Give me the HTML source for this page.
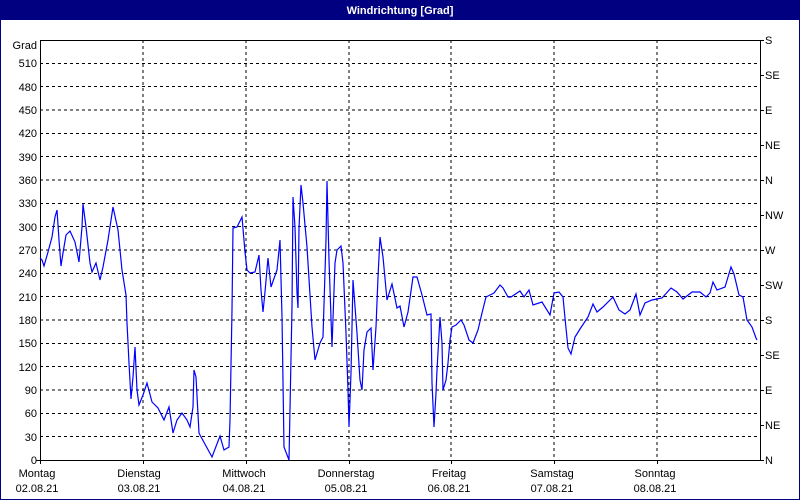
<!DOCTYPE html>
<html><head><meta charset="utf-8"><style>
html,body{margin:0;padding:0;background:#fff;}
body{width:800px;height:500px;overflow:hidden;}
svg{display:block;}
text{font-family:"Liberation Sans",sans-serif;font-size:11px;fill:#000;}
</style></head><body>
<svg width="800" height="500" viewBox="0 0 800 500" xmlns="http://www.w3.org/2000/svg">
<rect x="0" y="0" width="800" height="500" fill="#fff"/>
<rect x="0.5" y="0.5" width="799" height="499" fill="none" stroke="#000080" stroke-width="1"/>
<rect x="0" y="0" width="800" height="20" fill="#000080"/>
<text x="400" y="14" text-anchor="middle" style="fill:#fff;font-weight:bold;font-size:11px">Windrichtung [Grad]</text>
<g stroke="#000" stroke-width="1" stroke-dasharray="3,3" shape-rendering="crispEdges">
<line x1="40" y1="436.7" x2="760" y2="436.7"/>
<line x1="40" y1="413.3" x2="760" y2="413.3"/>
<line x1="40" y1="390" x2="760" y2="390"/>
<line x1="40" y1="366.7" x2="760" y2="366.7"/>
<line x1="40" y1="343.3" x2="760" y2="343.3"/>
<line x1="40" y1="320" x2="760" y2="320"/>
<line x1="40" y1="296.7" x2="760" y2="296.7"/>
<line x1="40" y1="273.3" x2="760" y2="273.3"/>
<line x1="40" y1="250" x2="760" y2="250"/>
<line x1="40" y1="226.7" x2="760" y2="226.7"/>
<line x1="40" y1="203.3" x2="760" y2="203.3"/>
<line x1="40" y1="180" x2="760" y2="180"/>
<line x1="40" y1="156.7" x2="760" y2="156.7"/>
<line x1="40" y1="133.3" x2="760" y2="133.3"/>
<line x1="40" y1="110" x2="760" y2="110"/>
<line x1="40" y1="86.7" x2="760" y2="86.7"/>
<line x1="40" y1="63.3" x2="760" y2="63.3"/>
<line x1="143" y1="40" x2="143" y2="460"/>
<line x1="246" y1="40" x2="246" y2="460"/>
<line x1="349" y1="40" x2="349" y2="460"/>
<line x1="451" y1="40" x2="451" y2="460"/>
<line x1="554" y1="40" x2="554" y2="460"/>
<line x1="657" y1="40" x2="657" y2="460"/>
</g>
<g stroke="#000" stroke-width="1" shape-rendering="crispEdges" fill="none">
<path d="M40.5 40.5H760.5V460.5H40.5Z"/>
<path d="M36 460.5H40 M40.5 460V464 M143.5 460V464 M246.5 460V464 M349.5 460V464 M451.5 460V464 M554.5 460V464 M657.5 460V464"/>
<path d="M760 40.5H764 M760 75.5H764 M760 110.5H764 M760 145.5H764 M760 180.5H764 M760 215.5H764 M760 250.5H764 M760 285.5H764 M760 320.5H764 M760 355.5H764 M760 390.5H764 M760 425.5H764 M760 460.5H764"/>
</g>
<g text-anchor="end">
<text x="37" y="49">Grad</text>
<text x="37" y="67">510</text><text x="37" y="91">480</text><text x="37" y="114">450</text><text x="37" y="137">420</text>
<text x="37" y="161">390</text><text x="37" y="184">360</text><text x="37" y="207">330</text><text x="37" y="231">300</text>
<text x="37" y="254">270</text><text x="37" y="277">240</text><text x="37" y="301">210</text><text x="37" y="324">180</text>
<text x="37" y="347">150</text><text x="37" y="371">120</text><text x="37" y="394">90</text><text x="37" y="417">60</text>
<text x="37" y="441">30</text><text x="37" y="464">0</text>
</g>
<g>
<text x="765" y="44">S</text><text x="765" y="79">SE</text><text x="765" y="114">E</text><text x="765" y="149">NE</text>
<text x="765" y="184">N</text><text x="765" y="219">NW</text><text x="765" y="254">W</text><text x="765" y="289">SW</text>
<text x="765" y="324">S</text><text x="765" y="359">SE</text><text x="765" y="394">E</text><text x="765" y="429">NE</text>
<text x="765" y="464">N</text>
</g>
<g text-anchor="middle">
<text x="37" y="477">Montag</text><text x="37" y="492">02.08.21</text>
<text x="139" y="477">Dienstag</text><text x="139" y="492">03.08.21</text>
<text x="244" y="477">Mittwoch</text><text x="244" y="492">04.08.21</text>
<text x="346" y="477">Donnerstag</text><text x="346" y="492">05.08.21</text>
<text x="449" y="477">Freitag</text><text x="449" y="492">06.08.21</text>
<text x="552" y="477">Samstag</text><text x="552" y="492">07.08.21</text>
<text x="655" y="477">Sonntag</text><text x="655" y="492">08.08.21</text>
</g>
<polyline fill="none" stroke="#0000ff" stroke-width="1.2" points="
40,258 42,260 44,266 48,252 52,237 55,217 57,210 59,240 61,266 63,253 66,235 70,231 75,242 79,262 82,227 83,204 86,227 90,263 92,272 96,263 100,280 103,267 108,240 113,207 118,230 122,270 126,295 127,323 129,363 131,399 133,377 135,347 137,390 139,405 143,395 147,383 152,402 158,408 164,420 169,407 173,433 177,420 182,413 187,420 190,427 193,407 194,370 196,377 199,433
200,435 212,457 220,436 224,450 229,447 230,420 232,310 233,228 237,227 242,217 245,252 247,270 250,273 255,272 259,255 261,290 263,312 265,292 268,258 271,287 277,270 280,240 282,317 284,447 289,460 292,307 293,197 295,227 297,293 298,308 299,228 301,185 303,203 307,247 312,327 315,360 320,343 323,337 326,240 327,181 329,260 332,347 335,263 337,250 341,246 343,263 346,333 348,390 349,427 351,373 353,280 357,333 360,380 362,390 364,350 367,332 371,328 373,370 376,327 378,277 380,237 383,257 387,300 392,284 397,308 400,306
404,327 408,312 413,277 417,277 422,295 427,315 431,314 432,383 434,427 436,393 437,370 440,317 442,343 443,390 446,380 448,363 450,340 452,327 456,325 461,320 464,325 469,340 473,343 478,330 482,313 486,297 490,295 494,293 500,285 503,288 508,297 511,297 517,293 520,291 524,297 529,290 533,305 542,302 550,315 554,293 559,292 563,297 565,318 568,348 571,354 575,337 580,329
588,317 593,304 597,312 603,307 613,297 619,310 625,314 630,310 636,294 640,315 645,303 652,300 662,298 671,288 677,292 683,299 692,292 700,292 706,297 710,293 713,282 717,290 725,287 731,267 734,274 739,295 743,297 747,320 752,327 756,338 757,340"/>
</svg>
</body></html>
